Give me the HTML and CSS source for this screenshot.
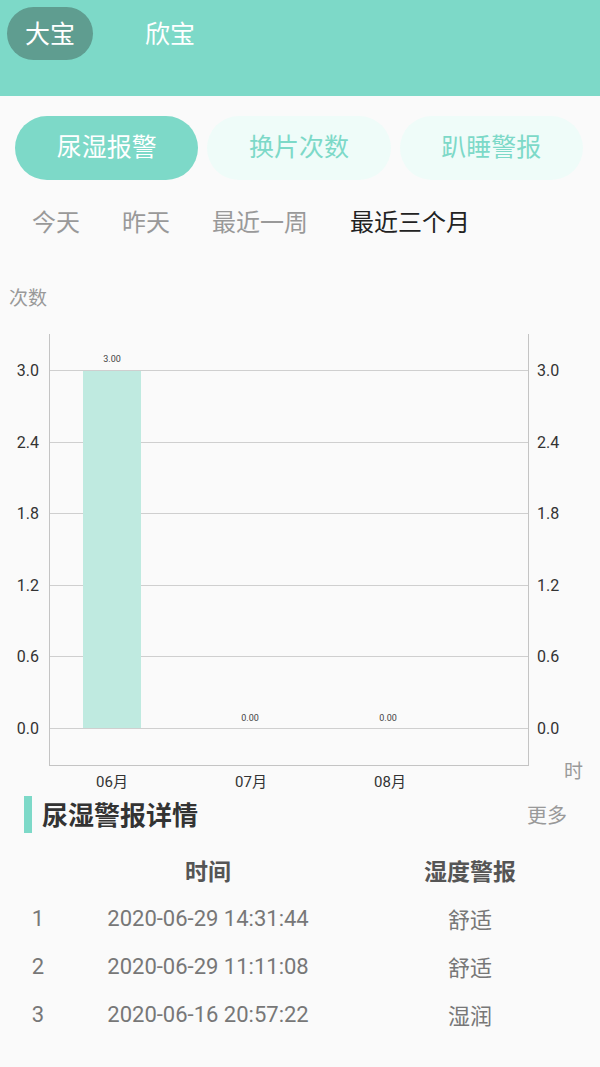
FILE: index.html
```html
<!DOCTYPE html>
<html lang="zh">
<head>
    <meta charset="UTF-8">
    <meta name="viewport" content="width=device-width, initial-scale=1.0">
    <title>尿湿报警</title>
    <link rel="stylesheet" href="styles.css">
</head>
<body>
    <header class="top-bar">
        <span class="baby baby-active">大宝</span>
        <span class="baby">欣宝</span>
    </header>

    <nav class="tabs">
        <a class="tab tab-active" href="#">尿湿报警</a>
        <a class="tab" href="#">换片次数</a>
        <a class="tab" href="#">趴睡警报</a>
    </nav>

    <div class="periods">
        <span class="period">今天</span>
        <span class="period">昨天</span>
        <span class="period">最近一周</span>
        <span class="period period-active">最近三个月</span>
    </div>

    <!-- 图表 -->
    <svg class="chart" width="600" height="536" viewBox="0 0 600 536">
        <text class="unit" x="9" y="45">次数</text>

        <g class="grid">
            <line x1="49" y1="110.5" x2="528" y2="110.5"/>
            <line x1="49" y1="182.5" x2="528" y2="182.5"/>
            <line x1="49" y1="253.5" x2="528" y2="253.5"/>
            <line x1="49" y1="325.5" x2="528" y2="325.5"/>
            <line x1="49" y1="396.5" x2="528" y2="396.5"/>
            <line x1="49" y1="468.5" x2="528" y2="468.5"/>
        </g>
        <g class="axis">
            <line x1="49.5" y1="74" x2="49.5" y2="505"/>
            <line x1="528.5" y1="74" x2="528.5" y2="505"/>
            <line x1="49" y1="505.5" x2="529" y2="505.5"/>
        </g>

        <rect class="bar" x="83" y="111" width="58" height="357"/>

        <g class="value">
            <text x="112" y="102">3.00</text>
            <text x="250" y="461">0.00</text>
            <text x="388" y="461">0.00</text>
        </g>

        <g class="tick tick-left">
            <text x="39" y="116">3.0</text>
            <text x="39" y="188">2.4</text>
            <text x="39" y="259">1.8</text>
            <text x="39" y="331">1.2</text>
            <text x="39" y="402">0.6</text>
            <text x="39" y="474">0.0</text>
        </g>
        <g class="tick">
            <text x="537" y="116">3.0</text>
            <text x="537" y="188">2.4</text>
            <text x="537" y="259">1.8</text>
            <text x="537" y="331">1.2</text>
            <text x="537" y="402">0.6</text>
            <text x="537" y="474">0.0</text>
        </g>

        <g class="month">
            <text x="112" y="527">06月</text>
            <text x="251" y="527">07月</text>
            <text x="390" y="527">08月</text>
        </g>
        <text class="unit" x="564" y="518">时</text>
    </svg>

    <section class="details">
        <div class="details-head">
            <h2 class="details-title">尿湿警报详情</h2>
            <a class="more" href="#">更多</a>
        </div>

        <div class="row row-head">
            <span></span>
            <span>时间</span>
            <span>湿度警报</span>
        </div>
        <div class="row">
            <span>1</span>
            <span>2020-06-29 14:31:44</span>
            <span>舒适</span>
        </div>
        <div class="row">
            <span>2</span>
            <span>2020-06-29 11:11:08</span>
            <span>舒适</span>
        </div>
        <div class="row">
            <span>3</span>
            <span>2020-06-16 20:57:22</span>
            <span>湿润</span>
        </div>
    </section>
</body>
</html>
```

FILE: styles.css
```css
/* 通用 */
* {
    box-sizing: border-box;
    margin: 0;
    padding: 0;
}

body {
    font-family: Roboto, "Noto Sans CJK SC", sans-serif;
    background-color: #fafafa;
    width: 600px;
    height: 1067px;
    overflow: hidden;
}

a {
    text-decoration: none;
}

/* 顶部宝宝切换 */
.top-bar {
    background-color: #7dd9c8;
    height: 96px;
    padding: 7px 7px 0;
    display: flex;
    align-items: flex-start;
}

.baby {
    height: 53px;
    line-height: 50px;
    padding: 3px 18px 0;
    font-size: 25px;
    color: #fff;
}

.baby-active {
    background-color: #5f9d90;
    border-radius: 27px;
}

.baby + .baby {
    margin-left: 34px;
}

/* 类型标签 */
.tabs {
    display: grid;
    grid-template-columns: repeat(3, 1fr);
    gap: 9px;
    padding: 20px 17px 0 15px;
}

.tab {
    height: 64px;
    line-height: 64px;
    border-radius: 32px;
    text-align: center;
    font-size: 25px;
    color: #7dd9c8;
    background-color: #effcf9;
}

.tab-active {
    background-color: #7dd9c8;
    color: #fff;
}

/* 时间段 */
.periods {
    height: 80px;
    display: flex;
    align-items: center;
    gap: 42px;
    padding-left: 32px;
}

.period {
    font-size: 24px;
    color: #999;
}

.period-active {
    color: #222;
}

/* 图表 */
.chart {
    display: block;
}

.chart text {
    font-family: Roboto, "Noto Sans CJK SC", sans-serif;
}

.chart .unit {
    font-size: 19px;
    fill: #999;
}

.grid line {
    stroke: #cfcfcf;
    stroke-width: 1;
}

.axis line {
    stroke: #c4c4c4;
    stroke-width: 1;
}

.bar {
    fill: #bfeae0;
}

.value text {
    font-size: 9px;
    fill: #444;
    text-anchor: middle;
}

.tick text {
    font-size: 16px;
    fill: #333;
}

.tick-left text {
    text-anchor: end;
}

.month text {
    font-size: 15px;
    fill: #333;
    text-anchor: middle;
}

/* 详情列表 */
.details-head {
    display: flex;
    align-items: center;
    justify-content: space-between;
    height: 37px;
    padding: 0 33px 0 24px;
}

.details-title {
    border-left: 8px solid #7dd9c8;
    height: 37px;
    line-height: 40px;
    padding-left: 10px;
    font-size: 26px;
    font-weight: bold;
    color: #333;
}

.more {
    font-size: 20px;
    color: #999;
}

.row {
    display: grid;
    grid-template-columns: 76px 264px 260px;
    height: 48px;
    align-items: center;
    text-align: center;
    font-size: 22px;
    color: #777;
}

.row-head {
    margin-top: 13px;
    font-size: 23px;
    font-weight: bold;
    color: #555;
}
```
